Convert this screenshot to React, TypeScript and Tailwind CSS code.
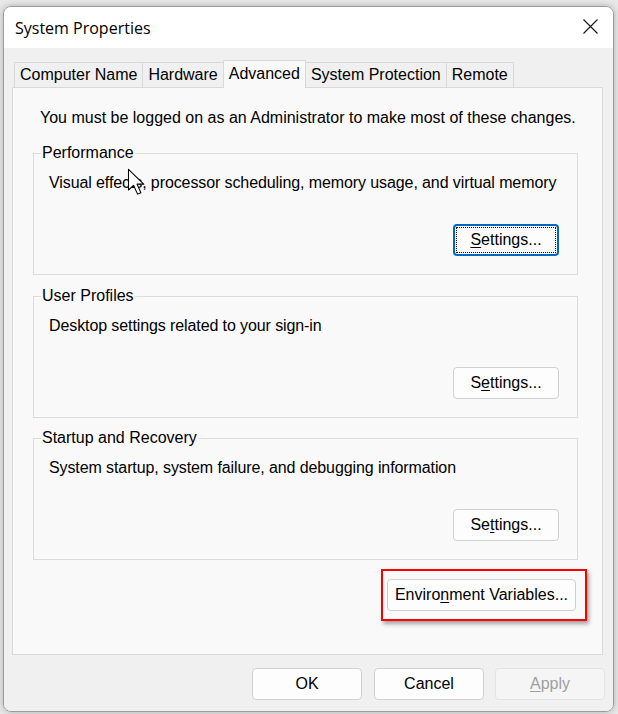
import React from "react";

type BtnProps = {
  children: React.ReactNode;
  className?: string;
  focused?: boolean;
  disabled?: boolean;
};

function Btn({ children, className = "", focused, disabled }: BtnProps) {
  const tone = disabled
    ? "bg-[#f5f5f5] border-[#e3e3e3] text-[#a0a0a0]"
    : focused
    ? "bg-[#fdfdfd] border-2 border-[#0067c0] text-black outline-1 outline-dotted outline-black outline-offset-[-4px]"
    : "bg-[#fdfdfd] border-[#d0d0d0] text-black";
  return (
    <button
      className={`h-[32px] rounded-[4px] border flex items-center justify-center text-[16px] leading-[18px] ${tone} ${className}`}
    >
      {children}
    </button>
  );
}

function U({ children }: { children: React.ReactNode }) {
  return <span className="underline underline-offset-2 decoration-1">{children}</span>;
}

const tabs = ["Computer Name", "Hardware", "Advanced", "System Protection", "Remote"];

function Group({
  title,
  text,
  button,
  className = "",
}: {
  title: string;
  text: string;
  button: React.ReactNode;
  className?: string;
}) {
  return (
    <fieldset className={`min-w-0 border border-[#dcdcdc] pl-[7px] pr-[18px] ${className}`}>
      <legend className="px-[1px] text-[16px] leading-[18px]">{title}</legend>
      <div className="h-[112px] pb-[18px] flex flex-col">
        <p className="ml-[8px] mt-[12px] text-[16px] leading-[18px] whitespace-nowrap tracking-[-0.1px]">
          {text}
        </p>
        <div className="mt-auto flex justify-end">{button}</div>
      </div>
    </fieldset>
  );
}

export default function App() {
  return (
    <div className="relative w-[618px] h-[714px] bg-[#e8e8e8] pt-[6px] pl-[3px] overflow-hidden font-['Liberation_Sans',Arial,sans-serif] text-black">
      <div className="w-[611px] h-[706px] rounded-[8px] border border-[#9c9c9c] overflow-hidden flex flex-col shadow-[0_0_6px_rgba(0,0,0,0.25)]">
        {/* title bar */}
        <div className="h-[41px] bg-white flex items-center justify-between pl-[11px] pr-[15px]">
          <span className="font-['Open_Sans','Segoe_UI',sans-serif] text-[16px] leading-[20px] mt-[1px]">
            System Properties
          </span>
          <svg width="15" height="15" viewBox="0 0 15 15" className="-mt-[2px]">
            <path d="M0.5 0.5 L14.5 14.5 M14.5 0.5 L0.5 14.5" stroke="#1a1a1a" strokeWidth="1.2" />
          </svg>
        </div>

        {/* body */}
        <div className="flex-1 bg-[#f0f0f0] pt-[12px] pl-[8px] pr-[8px] pb-[11px] flex flex-col">
          <div className="flex items-end h-[27px] ml-[2px] mr-[2px]">
            {tabs.map((t) =>
              t === "Advanced" ? (
                <div
                  key={t}
                  className="relative z-10 -mb-px -ml-px h-[28px] px-[5px] bg-[#f9f9f9] border border-b-0 border-[#d9d9d9] flex items-center text-[16px] leading-[18px] pb-[2px]"
                >
                  {t}
                </div>
              ) : (
                <div
                  key={t}
                  className="h-[25px] px-[5px] bg-[#f0f0f0] border border-b-0 border-[#d9d9d9] -ml-px first:ml-0 flex items-center text-[16px] leading-[18px]"
                >
                  {t}
                </div>
              )
            )}
          </div>

          <div className="h-[568px] mr-[2px] bg-[#f9f9f9] border border-[#d9d9d9] pt-[21px] pl-[20px] pr-[24px] flex flex-col">
            <p className="ml-[7px] text-[16px] leading-[18px]">
              You must be logged on as an Administrator to make most of these changes.
            </p>

            <Group
              className="mt-[17px]"
              title="Performance"
              text="Visual effects, processor scheduling, memory usage, and virtual memory"
              button={
                <Btn focused className="w-[106px]">
                  <span>
                    <U>S</U>ettings...
                  </span>
                </Btn>
              }
            />
            <Group
              className="mt-[12px]"
              title="User Profiles"
              text="Desktop settings related to your sign-in"
              button={
                <Btn className="w-[106px]">
                  <span>
                    S<U>e</U>ttings...
                  </span>
                </Btn>
              }
            />
            <Group
              className="mt-[11px]"
              title="Startup and Recovery"
              text="System startup, system failure, and debugging information"
              button={
                <Btn className="w-[106px]">
                  <span>
                    Se<U>t</U>tings...
                  </span>
                </Btn>
              }
            />

            <div className="mt-[9px] flex justify-end -mr-[9px]">
              <div className="border-2 border-[#ff0000] pt-[8px] pb-[8px] pl-[4px] pr-[9px] shadow-[2px_3px_4px_rgba(0,0,0,0.35)]">
                <Btn className="w-[189px]">
                  <span>
                    Enviro<U>n</U>ment Variables...
                  </span>
                </Btn>
              </div>
            </div>
          </div>

          <div className="mt-[13px] flex justify-end gap-[12px]">
            <Btn className="w-[110px]">OK</Btn>
            <Btn className="w-[110px]">Cancel</Btn>
            <Btn disabled className="w-[110px] -ml-px">
              <span>
                <U>A</U>pply
              </span>
            </Btn>
          </div>
        </div>
      </div>

      {/* mouse pointer */}
      <svg
        className="absolute left-[127px] top-[168px]"
        width="19"
        height="28"
        viewBox="0 0 14 21"
      >
        <path
          d="M1 1 L1 16.5 L4.8 13 L7.8 19.6 L10.3 18.5 L7.4 12.1 L12.4 12.1 Z"
          fill="white"
          stroke="black"
          strokeWidth="0.8"
          strokeLinejoin="round"
        />
      </svg>
    </div>
  );
}
